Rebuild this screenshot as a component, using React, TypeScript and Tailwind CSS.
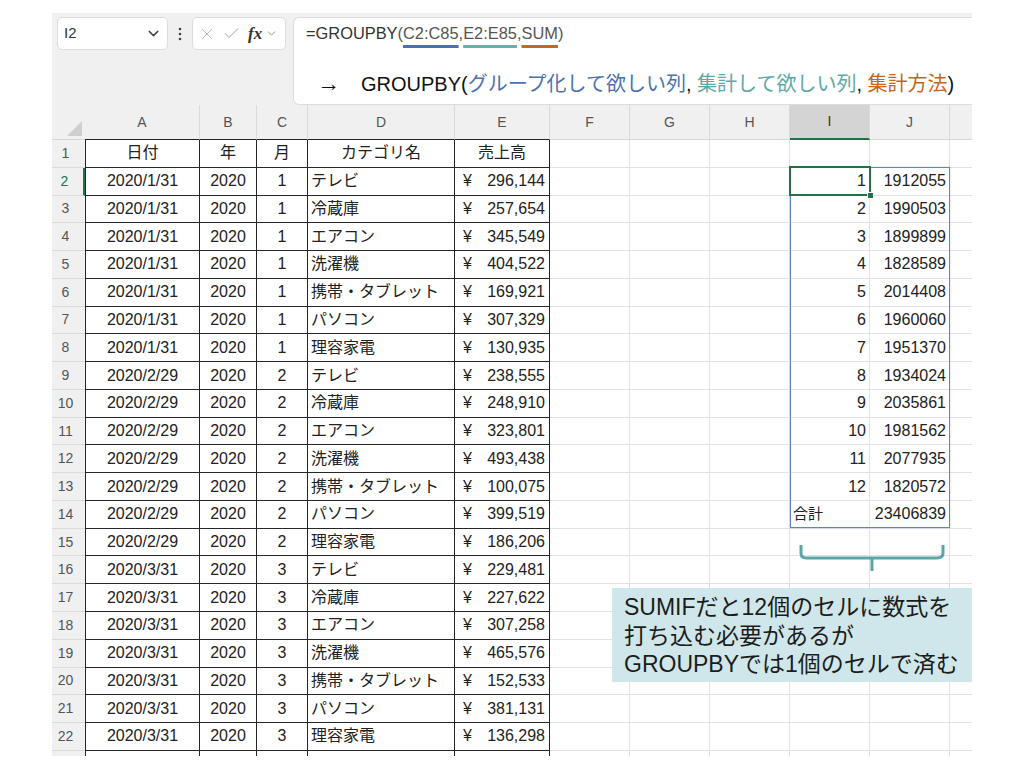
import React from "react";
import { ChevronDown, X, Check } from "lucide-react";

const ROWS: [string, string, string, string, string][] = [
  ["2020/1/31", "2020", "1", "テレビ", "296,144"],
  ["2020/1/31", "2020", "1", "冷蔵庫", "257,654"],
  ["2020/1/31", "2020", "1", "エアコン", "345,549"],
  ["2020/1/31", "2020", "1", "洗濯機", "404,522"],
  ["2020/1/31", "2020", "1", "携帯・タブレット", "169,921"],
  ["2020/1/31", "2020", "1", "パソコン", "307,329"],
  ["2020/1/31", "2020", "1", "理容家電", "130,935"],
  ["2020/2/29", "2020", "2", "テレビ", "238,555"],
  ["2020/2/29", "2020", "2", "冷蔵庫", "248,910"],
  ["2020/2/29", "2020", "2", "エアコン", "323,801"],
  ["2020/2/29", "2020", "2", "洗濯機", "493,438"],
  ["2020/2/29", "2020", "2", "携帯・タブレット", "100,075"],
  ["2020/2/29", "2020", "2", "パソコン", "399,519"],
  ["2020/2/29", "2020", "2", "理容家電", "186,206"],
  ["2020/3/31", "2020", "3", "テレビ", "229,481"],
  ["2020/3/31", "2020", "3", "冷蔵庫", "227,622"],
  ["2020/3/31", "2020", "3", "エアコン", "307,258"],
  ["2020/3/31", "2020", "3", "洗濯機", "465,576"],
  ["2020/3/31", "2020", "3", "携帯・タブレット", "152,533"],
  ["2020/3/31", "2020", "3", "パソコン", "381,131"],
  ["2020/3/31", "2020", "3", "理容家電", "136,298"],
];

const SUMS = [
  "1912055",
  "1990503",
  "1899899",
  "1828589",
  "2014408",
  "1960060",
  "1951370",
  "1934024",
  "2035861",
  "1981562",
  "2077935",
  "1820572",
];

const HEADERS = ["A", "B", "C", "D", "E", "F", "G", "H", "I", "J"];
const W = ["w-[115px]", "w-[57px]", "w-[51px]", "w-[147px]", "w-[95px]", "w-[80px]", "w-[80px]", "w-[80px]", "w-[80px]", "w-[80px]"];

function ColHeader() {
  return (
    <div className="flex h-[35px]">
      <div className="relative w-[33px] h-full border-b border-[#d6d6d6] bg-[#f0f0f0]">
        <div className="absolute right-[3px] bottom-[3px] w-0 h-0 border-l-[15px] border-l-transparent border-b-[15px] border-b-[#cfcfcf]" />
      </div>
      {HEADERS.map((h, i) => {
        const sel = h === "I";
        const table = i <= 4;
        return (
          <div
            key={h}
            className={`${W[i]} h-full flex items-center justify-center text-[14px] border-r border-r-[#dadada] ${
              sel
                ? "bg-[#d4d4d4] border-b-2 border-b-[#217346] text-[#333]"
                : table
                ? "bg-[#f0f0f0] border-b border-b-[#222] text-[#555]"
                : "bg-[#f0f0f0] border-b border-b-[#d6d6d6] text-[#555]"
            }`}
          >
            {h}
          </div>
        );
      })}
      <div className="w-[22px] h-full bg-[#f0f0f0] border-b border-b-[#d6d6d6]" />
    </div>
  );
}

function RowNum({ n, sel }: { n: string; sel?: boolean }) {
  return (
    <div
      className={`w-[33px] h-full flex items-center justify-center pr-[6px] text-[14px] bg-[#f0f0f0] border-b border-b-[#dadada] ${
        sel ? "text-[#217346] border-r-2 border-r-[#217346]" : "text-[#555]"
      }`}
    >
      {n}
    </div>
  );
}

const tcell = "h-full flex items-center border-r border-b border-[#262626] text-[16px] text-[#222] whitespace-nowrap";
const gcell = "h-full flex items-center border-r border-b border-[#e2e2e2] text-[16px] text-[#222] whitespace-nowrap";

function BodyRow({ r }: { r: number }) {
  let a = "",
    b = "",
    c = "",
    d = "",
    e: React.ReactNode = "";
  if (r === 1) {
    a = "日付";
    b = "年";
    c = "月";
    d = "カテゴリ名";
    e = "売上高";
  } else {
    const row = ROWS[r - 2];
    a = row[0];
    b = row[1];
    c = row[2];
    d = row[3];
    e = row[4];
  }
  let iv: React.ReactNode = null;
  let jv: React.ReactNode = null;
  if (r >= 2 && r <= 13) {
    iv = <span className="ml-auto pr-[3px]">{r - 1}</span>;
    jv = <span className="ml-auto pr-[3px]">{SUMS[r - 2]}</span>;
  } else if (r === 14) {
    iv = <span className="pl-[3px] text-[15px]">合計</span>;
    jv = <span className="ml-auto pr-[3px]">23406839</span>;
  }
  return (
    <div className="flex h-[27.77px]">
      <RowNum n={String(r)} sel={r === 2} />
      <div className={`${tcell} w-[115px] border-l justify-center`}>{a}</div>
      <div className={`${tcell} w-[57px] justify-center`}>{b}</div>
      <div className={`${tcell} w-[51px] justify-center`}>{c}</div>
      <div className={`${tcell} w-[147px] ${r === 1 ? "justify-center" : "pl-[3px]"}`}>{d}</div>
      <div className={`${tcell} w-[95px] ${r === 1 ? "justify-center" : "justify-between pl-[8px] pr-[4px]"}`}>
        {r === 1 ? (
          e
        ) : (
          <>
            <span>¥</span>
            <span>{e}</span>
          </>
        )}
      </div>
      <div className={`${gcell} w-[80px]`} />
      <div className={`${gcell} w-[80px]`} />
      <div className={`${gcell} w-[80px]`} />
      <div className={`${gcell} w-[80px]`}>{iv}</div>
      <div className={`${gcell} w-[80px]`}>{jv}</div>
      <div className={`${gcell} w-[22px] border-r-0`} />
    </div>
  );
}

function PartialRow() {
  return (
    <div className="flex h-[5px]">
      <div className="w-[33px] h-full bg-[#f0f0f0]" />
      <div className="w-[115px] h-full border-l border-r border-[#262626]" />
      <div className="w-[57px] h-full border-r border-[#262626]" />
      <div className="w-[51px] h-full border-r border-[#262626]" />
      <div className="w-[147px] h-full border-r border-[#262626]" />
      <div className="w-[95px] h-full border-r border-[#262626]" />
      <div className="w-[80px] h-full border-r border-[#e2e2e2]" />
      <div className="w-[80px] h-full border-r border-[#e2e2e2]" />
      <div className="w-[80px] h-full border-r border-[#e2e2e2]" />
      <div className="w-[80px] h-full border-r border-[#e2e2e2]" />
      <div className="w-[80px] h-full border-r border-[#e2e2e2]" />
      <div className="w-[22px] h-full" />
    </div>
  );
}

function FormulaBar() {
  return (
    <div className="flex h-[92px] bg-[#f0f0f0] pt-[4px] pl-[5px]">
      <div className="w-[111px] h-[33px] bg-white rounded-[5px] border border-[#dcdcdc] flex items-center pl-[6px] pr-[5px] text-[15px] text-[#333]">
        <span>I2</span>
        <ChevronDown className="ml-auto text-[#444]" size={17} strokeWidth={2} />
      </div>
      <div className="w-[24px] h-[33px] flex items-center justify-center">
        <svg width="4" height="14" viewBox="0 0 4 14">
          <circle cx="2" cy="2" r="1.3" fill="#444" />
          <circle cx="2" cy="7" r="1.3" fill="#444" />
          <circle cx="2" cy="12" r="1.3" fill="#444" />
        </svg>
      </div>
      <div className="w-[94px] h-[33px] bg-white rounded-[5px] border border-[#dcdcdc] flex items-center pl-[5px] gap-[6px]">
        <X size={18} strokeWidth={1.3} className="text-[#b8b8b8]" />
        <Check size={19} strokeWidth={1.3} className="text-[#b8b8b8]" />
        <span className="font-['Liberation_Serif',serif] italic font-bold text-[17px] text-[#333] leading-none ml-[1px]">fx</span>
        <ChevronDown size={13} strokeWidth={1.5} className="text-[#777] -ml-[3px]" />
      </div>
      <div className="ml-[7px] flex-1 h-[88px] bg-white rounded-l-[6px] border border-r-0 border-[#dcdcdc] pl-[12px] pt-[4px]">
        <div className="text-[16.4px] text-[#333] leading-[22px] whitespace-nowrap">
          <span>=GROUPBY</span>
          <span className="text-[#555]">
            (
            <span className="underline decoration-[3px] underline-offset-[6px] decoration-[#4a72b0]">C2:C85</span>,
            <span className="underline decoration-[3px] underline-offset-[6px] decoration-[#6aaea8]">E2:E85</span>,
            <span className="underline decoration-[3px] underline-offset-[6px] decoration-[#c8661f]">SUM</span>)
          </span>
        </div>
        <div className="mt-[28px] flex items-center text-[20px] text-[#111] whitespace-nowrap leading-none">
          <span className="ml-[11px] w-[44px] text-[23px]">→</span>
          <span>GROUPBY(</span>
          <span className="text-[#4a72b0]">グループ化して欲しい列</span>
          <span>,&nbsp;</span>
          <span className="text-[#5ba9a3]">集計して欲しい列</span>
          <span>,&nbsp;</span>
          <span className="text-[#c5651d]">集計方法</span>
          <span>)</span>
        </div>
      </div>
    </div>
  );
}

export default function App() {
  return (
    <div className="relative w-[1024px] h-[768px] bg-white overflow-hidden font-['Liberation_Sans','Noto_Sans_CJK_JP',sans-serif]">
      <div className="ml-[52px] mt-[13px] w-[920px]">
        <FormulaBar />
        <div className="relative bg-white">
          <ColHeader />
          {Array.from({ length: 22 }, (_, i) => (
            <BodyRow key={i} r={i + 1} />
          ))}
          <PartialRow />
          {/* range outline I2:J14 */}
          <div className="absolute left-[738px] top-[62px] w-[160px] h-[361px] border border-[#5b85c6] shadow-[0_0_2px_rgba(91,133,198,0.35)] pointer-events-none" />
          {/* active cell I2 */}
          <div className="absolute left-[737px] top-[61px] w-[82px] h-[30px] border-2 border-[#217346] pointer-events-none" />
          <div className="absolute left-[815px] top-[87px] w-[7px] h-[7px] bg-[#217346] border border-white" />
        </div>
      </div>

      {/* bracket */}
      <svg className="absolute left-[795px] top-[540px]" width="156" height="36" viewBox="0 0 156 36">
        <path
          d="M6 5 L6 13 Q6 18 11 18 L142 18 Q148 18 148 13 L148 5 M77 18 L77 31"
          fill="none"
          stroke="#5aa6a6"
          strokeWidth="3"
        />
      </svg>

      {/* callout */}
      <div className="absolute left-[612px] top-[588px] w-[360px] h-[94px] bg-[#cfe7ea] pl-[12px] pt-[5px] text-[23px] leading-[28.5px] text-[#1c1c1c] whitespace-nowrap">
        <div>SUMIFだと12個のセルに数式を</div>
        <div>打ち込む必要があるが</div>
        <div>GROUPBYでは1個のセルで済む</div>
      </div>
    </div>
  );
}
